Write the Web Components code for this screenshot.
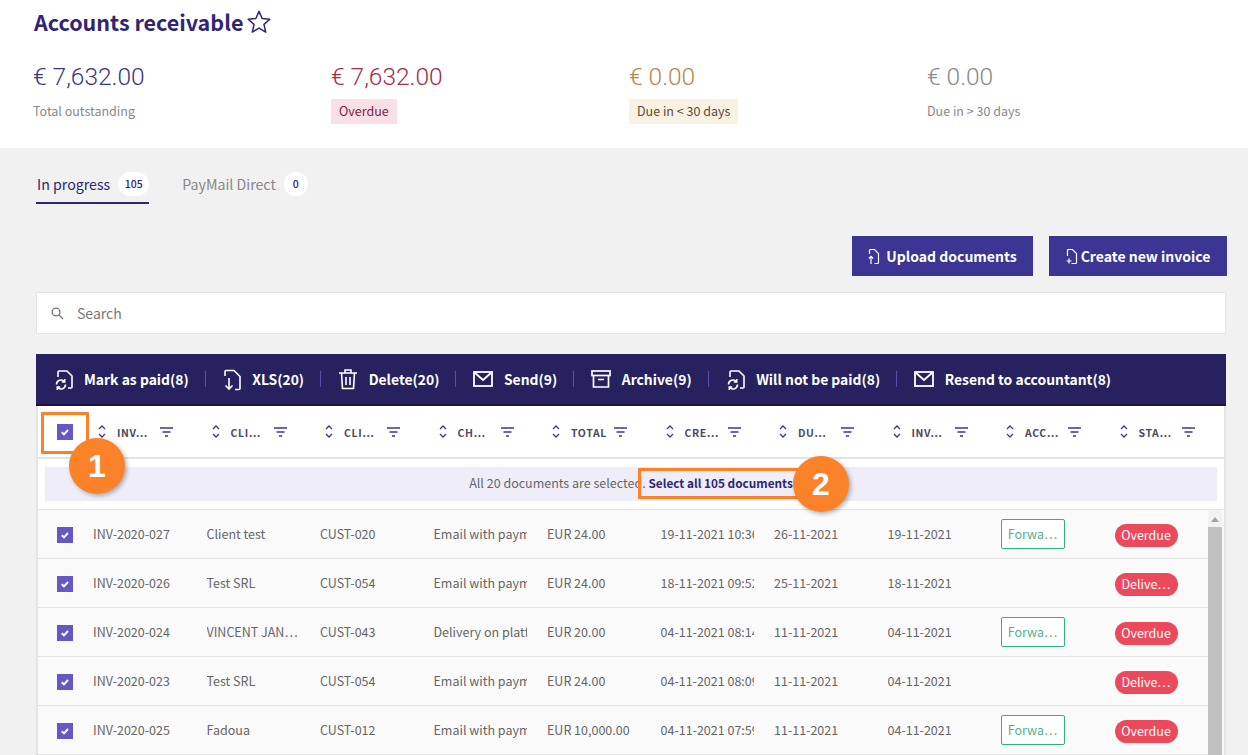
<!DOCTYPE html>
<html>
<head>
<meta charset="utf-8">
<title>Accounts receivable</title>
<style>
	html,body{margin:0;height:755px;overflow:hidden;background:#f1f1f1}
	body{font-family:"Noto Sans CJK JP","Open Sans",sans-serif;color:#555}
</style>
</head>
<body>
<ar-page></ar-page>
<script>
const font = `"Noto Sans CJK JP","Open Sans",sans-serif`

const icons = {
	star: `<svg width="26" height="26" viewBox="0 0 24 24" fill="none" stroke="currentColor" stroke-width="1.400" stroke-linejoin="round"><path d="M12 2.200l2.900 6.600 7.100.7-5.400 4.700 1.600 7.100-6.200-3.700-6.200 3.700 1.600-7.100L2 9.500l7.100-.7z"/></svg>`,
	payment: `<svg width="20" height="24" viewBox="0 0 20 24" fill="none" stroke="currentColor" stroke-width="1.600"><path d="M5 10V5q0-1 1-1h8l5 5v11q0 1-1 1h-3"/><path d="M3.500 17.500a4.500 4.500 0 0 1 8-2.800"/><path d="M11.800 12v3h-3" stroke-width="1.400"/><path d="M12.500 17.500a4.500 4.500 0 0 1-8 2.800"/><path d="M4.200 23v-3h3" stroke-width="1.400"/></svg>`,
	download: `<svg width="19" height="24" viewBox="0 0 19 24" fill="none" stroke="currentColor" stroke-width="1.600"><path d="M3 9V4.500q0-1 1-1h8l6 6v12q0 1-1 1h-4"/><path d="M7 11v11M3.500 18.500L7 22l3.500-3.500"/></svg>`,
	trash: `<svg width="20" height="22" viewBox="0 0 20 22" fill="none" stroke="currentColor" stroke-width="1.600"><path d="M1 5h18M7 5V2h6v3M3.500 5l1 15.500h11l1-15.500M8 9v8M12 9v8"/></svg>`,
	mail: `<svg width="20" height="16" viewBox="0 0 20 16" fill="none" stroke="currentColor" stroke-width="1.800"><rect x="1" y="1" width="18" height="14"/><path d="M1.500 1.500l8.500 7.500 8.500-7.500"/></svg>`,
	archive: `<svg width="20" height="18" viewBox="0 0 20 18" fill="none" stroke="currentColor" stroke-width="1.700"><rect x="1" y="1" width="18" height="4.500"/><path d="M2.500 5.500V17h15V5.500M7 9.500h6"/></svg>`,
	upload: `<svg width="12" height="17" viewBox="0 0 12 17" fill="none" stroke="currentColor" stroke-width="1.200"><path d="M1.500 6V2.500q0-1 1-1h4l4 4v9q0 1-1 1h-3"/><path d="M3 16V8.500M.8 10.500L3 8.300l2.200 2.200"/></svg>`,
	create: `<svg width="12" height="17" viewBox="0 0 12 17" fill="none" stroke="currentColor" stroke-width="1.200"><path d="M1.500 8V2.500q0-1 1-1h4l4 4v9q0 1-1 1h-4"/><path d="M3 10.500v5M.5 13h5"/></svg>`,
	search: `<svg width="13" height="13" viewBox="0 0 13 13" fill="none" stroke="#777" stroke-width="1.300"><circle cx="5" cy="5" r="3.900"/><path d="M8 8l4 4"/></svg>`,
	sort: `<svg width="8" height="13" viewBox="0 0 8 13" fill="none" stroke="#3d3593" stroke-width="1.300"><path d="M1 4l3-3 3 3M1 9l3 3 3-3"/></svg>`,
	filter: `<svg width="13" height="10" viewBox="0 0 13 10" fill="none" stroke="#3d3593" stroke-width="1.300"><path d="M0 1h13M2.500 5h8M5 9h3"/></svg>`
}

class ArCheck extends HTMLElement{
	constructor(){
		super()
		this.attachShadow({mode:"open"}).innerHTML = `
			<style>
				:host{display:block;width:16px;height:16px;background:#6558c4}
				svg{display:block}
			</style>
			<svg width="16" height="16" viewBox="0 0 16 16" fill="none" stroke="#fff" stroke-width="2"><path d="M4.800 8.200l2.200 2.200 4-4.400"/></svg>`
	}
}
customElements.define("ar-check", ArCheck)

class ArStat extends HTMLElement{
	constructor(){
		super()
		this.attachShadow({mode:"open"}).innerHTML = `
			<style>
				:host{display:block;width:298px;font-family:${font}}
				.amount{font-family:Roboto,sans-serif;font-size:24.500px;line-height:36px;font-weight:300;color:var(--amount,#3b3580)}
				.label{display:inline-block;margin-top:4px;height:25px;line-height:23px;font-size:12.500px;color:var(--label,#888);background:var(--tag,none);padding:var(--pad,0)}
			</style>
			<div class="amount"><slot name="amount"></slot></div>
			<div class="label"><slot></slot></div>`
	}
}
customElements.define("ar-stat", ArStat)

class ArTabs extends HTMLElement{
	constructor(){
		super()
		this.attachShadow({mode:"open"}).innerHTML = `
			<style>
				:host{display:flex;gap:32px;font-size:14.200px}
				.tab{display:flex;align-items:center;gap:8px;padding:0 0 6px 1px;height:24px;line-height:24px;color:#888;border-bottom:2px solid transparent}
				.on{color:#2e2574;border-color:#2e2574}
				b{display:block;min-width:24px;height:24px;line-height:24px;box-sizing:border-box;padding:0 6.500px;border-radius:12px;background:#fff;font-size:10.500px;font-weight:500;text-align:center;color:#2e2574}
			</style>
			<div class="tab on">In progress <b>105</b></div>
			<div class="tab">PayMail Direct <b>0</b></div>`
	}
}
customElements.define("ar-tabs", ArTabs)

class ArButton extends HTMLElement{
	constructor(){
		super()
		this.attachShadow({mode:"open"}).innerHTML = `
			<style>
				:host{display:flex;align-items:center;justify-content:center;height:40px;gap:var(--gap,6px);background:#3d3593;color:#fff;font-size:14px;font-weight:700;line-height:38px}
				svg{display:block}
			</style>
			${icons[this.getAttribute("icon")]}<slot></slot>`
	}
}
customElements.define("ar-button", ArButton)

class ArSearch extends HTMLElement{
	constructor(){
		super()
		this.attachShadow({mode:"open"}).innerHTML = `
			<style>
				:host{display:flex;align-items:center;gap:13px;box-sizing:border-box;height:42px;padding-left:14px;background:#fff;border:1px solid #e4e4e4;color:#777;font-size:14px}
			</style>
			${icons.search}<span>Search</span>`
	}
}
customElements.define("ar-search", ArSearch)

class ArAction extends HTMLElement{
	constructor(){
		super()
		this.attachShadow({mode:"open"}).innerHTML = `
			<style>
				:host{display:flex;align-items:center;gap:11px;color:#fff;font-size:13.900px;font-weight:700;white-space:nowrap}
				svg{display:block}
				:host(:not(:last-child))::after{content:"";width:1px;height:16px;background:#5a50ad;margin:0 16.500px 0 5px}
			</style>
			${icons[this.getAttribute("icon")]}<slot></slot>`
	}
}
customElements.define("ar-action", ArAction)

class ArToolbar extends HTMLElement{
	constructor(){
		super()
		this.attachShadow({mode:"open"}).innerHTML = `
			<style>
				:host{display:flex;align-items:center;box-sizing:border-box;height:52px;padding-left:17px;background:#27225f;border-bottom:2px solid #1a1548}
			</style>
			<slot></slot>`
	}
}
customElements.define("ar-toolbar", ArToolbar)

const colTemplate = "55px repeat(9,113.500px) 1fr"

class ArHeader extends HTMLElement{
	constructor(){
		super()
		const labels = ["INV…","CLI…","CLI…","CH…","TOTAL","CRE…","DU…","INV…","ACC…","STA…"]
		this.attachShadow({mode:"open"}).innerHTML = `
			<style>
				:host{display:grid;grid-template-columns:${colTemplate};align-items:center;height:51px;background:#fff;border-bottom:2px solid #e4e4e4}
				ar-check{margin-left:19px}
				.c{display:flex;align-items:center;padding-left:5px}
				span{width:43px;margin-left:11px;padding-top:2px;font-size:10.500px;font-weight:700;letter-spacing:.6px;color:#4c4a5c;white-space:nowrap}
				svg{display:block;flex:none}
			</style>
			<ar-check></ar-check>
			${labels.map(l => `<div class="c">${icons.sort}<span>${l}</span>${icons.filter}</div>`).join("")}`
	}
}
customElements.define("ar-header", ArHeader)

class ArSelectAll extends HTMLElement{
	constructor(){
		super()
		this.attachShadow({mode:"open"}).innerHTML = `
			<style>
				:host{display:block;padding:8px 7px 8px 7px;background:#fff;border-bottom:1px solid #e4e4e4}
				div{height:34px;line-height:32px;background:#efeef8;text-align:center;font-size:12.500px;color:#666}
				b{color:#2e2574;font-weight:700;font-size:11.800px}
			</style>
			<div>All 20 documents are selected. <b>Select all 105 documents</b></div>`
	}
}
customElements.define("ar-select-all", ArSelectAll)

class ArRow extends HTMLElement{
	constructor(){
		super()
		const cells = this.getAttribute("cells").split("|")
		const forwarded = this.hasAttribute("forwarded")
		this.attachShadow({mode:"open"}).innerHTML = `
			<style>
				:host{display:grid;grid-template-columns:${colTemplate};align-items:center;height:48px;background:#fafafa;border-bottom:1px solid #e4e4e4;font-size:12.500px;color:#666}
				ar-check{margin:2px 0 0 19px}
				.c{width:93px;overflow:hidden;white-space:nowrap;margin-bottom:2px}
				.fw{display:block;box-sizing:border-box;width:64px;height:30px;line-height:27px;text-align:center;text-indent:-1px;background:#fff;border:1px solid #2eb37c;border-radius:2px;color:#55b08c;white-space:nowrap}
				.st{display:block;width:63px;height:23px;line-height:22px;margin-top:2px;text-align:center;background:#ea4a5c;border-radius:12px;color:#fff;white-space:nowrap}
			</style>
			<ar-check></ar-check>
			${cells.slice(0,7).map(c => `<div class="c">${c}</div>`).join("")}
			<div class="c">${cells[7]}</div>
			<div>${forwarded ? `<span class="fw">Forwa…</span>` : ""}</div>
			<div><span class="st">${forwarded ? "Overdue" : "Delive…"}</span></div>`
	}
}
customElements.define("ar-row", ArRow)

class ArScrollbar extends HTMLElement{
	constructor(){
		super()
		this.attachShadow({mode:"open"}).innerHTML = `
			<style>
				:host{display:block;background:#f1f1f1}
				.up{height:17px;display:flex;align-items:center;justify-content:center}
				.up i{border:4px solid transparent;border-top:0;border-bottom:5px solid #a3a3a3;margin-top:1px}
				.thumb{height:300px;background:#c1c1c1}
			</style>
			<div class="up"><i></i></div>
			<div class="thumb"></div>`
	}
}
customElements.define("ar-scrollbar", ArScrollbar)

class ArTable extends HTMLElement{
	constructor(){
		super()
		this.attachShadow({mode:"open"}).innerHTML = `
			<style>
				:host{display:block;border:solid #e4e4e4;border-width:0 2px}
				.body{display:grid;grid-template-columns:1170px 14px 2px;height:260px;overflow:hidden;background:#fff}
				.rows{display:block;min-width:0}
				.end{background:#f8f8f8}
			</style>
			<ar-header></ar-header>
			<ar-select-all></ar-select-all>
			<div class="body">
				<div class="rows"><slot></slot></div>
				<ar-scrollbar></ar-scrollbar>
				<div class="end"></div>
			</div>`
	}
}
customElements.define("ar-table", ArTable)

class ArMarker extends HTMLElement{
	constructor(){
		super()
		this.attachShadow({mode:"open"}).innerHTML = `
			<style>
				:host{position:absolute;left:${this.getAttribute("x")}px;top:${this.getAttribute("y")}px;width:56px;height:56px;border-radius:50%;background:#fb8228;box-shadow:2px 2px 4px rgba(0,0,0,.3);color:#fff;font:700 32px/56px "Liberation Sans",sans-serif;text-align:center}
			</style>
			<slot></slot>`
	}
}
customElements.define("ar-marker", ArMarker)

class ArFrame extends HTMLElement{
	constructor(){
		super()
		this.attachShadow({mode:"open"}).innerHTML = `
			<style>
				:host{position:absolute;box-sizing:border-box;left:${this.getAttribute("x")}px;top:${this.getAttribute("y")}px;width:${this.getAttribute("w")}px;height:${this.getAttribute("h")}px;border:3px solid #fb8228;border-radius:1px}
			</style>`
	}
}
customElements.define("ar-frame", ArFrame)

class ArPage extends HTMLElement{
	constructor(){
		super()
		const rows = [
			["INV-2020-027","Client test","CUST-020","Email with payment","EUR 24.00","19-11-2021 10:36","26-11-2021","19-11-2021",1],
			["INV-2020-026","Test SRL","CUST-054","Email with payment","EUR 24.00","18-11-2021 09:52","25-11-2021","18-11-2021",0],
			["INV-2020-024","VINCENT JAN…","CUST-043","Delivery on platform","EUR 20.00","04-11-2021 08:14","11-11-2021","04-11-2021",1],
			["INV-2020-023","Test SRL","CUST-054","Email with payment","EUR 24.00","04-11-2021 08:09","11-11-2021","04-11-2021",0],
			["INV-2020-025","Fadoua","CUST-012","Email with payment","EUR 10,000.00","04-11-2021 07:59","11-11-2021","04-11-2021",1]
		]
		this.attachShadow({mode:"open"}).innerHTML = `
			<style>
				:host{display:block;position:relative;height:755px;overflow:hidden;background:#f1f1f1;font-family:${font}}
				header{background:#fff;padding:7px 0 24px 34px}
				h1{display:flex;align-items:center;gap:3px;margin:0;height:30px;line-height:30px;font-size:21.500px;font-weight:700;color:#2e2574}
				svg{display:block}
				.stats{display:flex;margin:22px 0 0 -1px}
				main{padding:24px 22px 0 36px}
				.actions{display:flex;justify-content:flex-end;gap:16px;margin:32px -1px 16px 0}
				ar-search{margin-bottom:20px}
			</style>
			<header>
				<h1>Accounts receivable ${icons.star}</h1>
				<div class="stats">
					<ar-stat><span slot="amount">€ 7,632.00</span>Total outstanding</ar-stat>
					<ar-stat style="--amount:#a32c4c;--label:#7a2340;--tag:#f9e0e5;--pad:0 8px"><span slot="amount">€ 7,632.00</span>Overdue</ar-stat>
					<ar-stat style="--amount:#b5874f;--label:#5a4a30;--tag:#faf1e5;--pad:0 8px"><span slot="amount">€ 0.00</span>Due in &lt; 30 days</ar-stat>
					<ar-stat style="--amount:#8a8a8a"><span slot="amount">€ 0.00</span>Due in &gt; 30 days</ar-stat>
				</div>
			</header>
			<main>
				<ar-tabs></ar-tabs>
				<div class="actions">
					<ar-button icon="upload" style="width:181px">Upload documents</ar-button>
					<ar-button icon="create" style="width:178px;--gap:3px">Create new invoice</ar-button>
				</div>
				<ar-search></ar-search>
				<ar-toolbar>
					<ar-action icon="payment">Mark as paid(8)</ar-action>
					<ar-action icon="download">XLS(20)</ar-action>
					<ar-action icon="trash">Delete(20)</ar-action>
					<ar-action icon="mail">Send(9)</ar-action>
					<ar-action icon="archive">Archive(9)</ar-action>
					<ar-action icon="payment">Will not be paid(8)</ar-action>
					<ar-action icon="mail">Resend to accountant(8)</ar-action>
				</ar-toolbar>
				<ar-table>
					${rows.map(r => `<ar-row cells="${r.slice(0,8).join("|")}"${r[8] ? " forwarded" : ""}></ar-row>`).join("")}
				</ar-table>
			</main>
			<ar-frame x="41" y="412" w="48" h="42"></ar-frame>
			<ar-marker x="69" y="438">1</ar-marker>
			<ar-frame x="638" y="468" w="164" h="31"></ar-frame>
			<ar-marker x="793" y="456">2</ar-marker>`
	}
}
customElements.define("ar-page", ArPage)
</script>
</body>
</html>
